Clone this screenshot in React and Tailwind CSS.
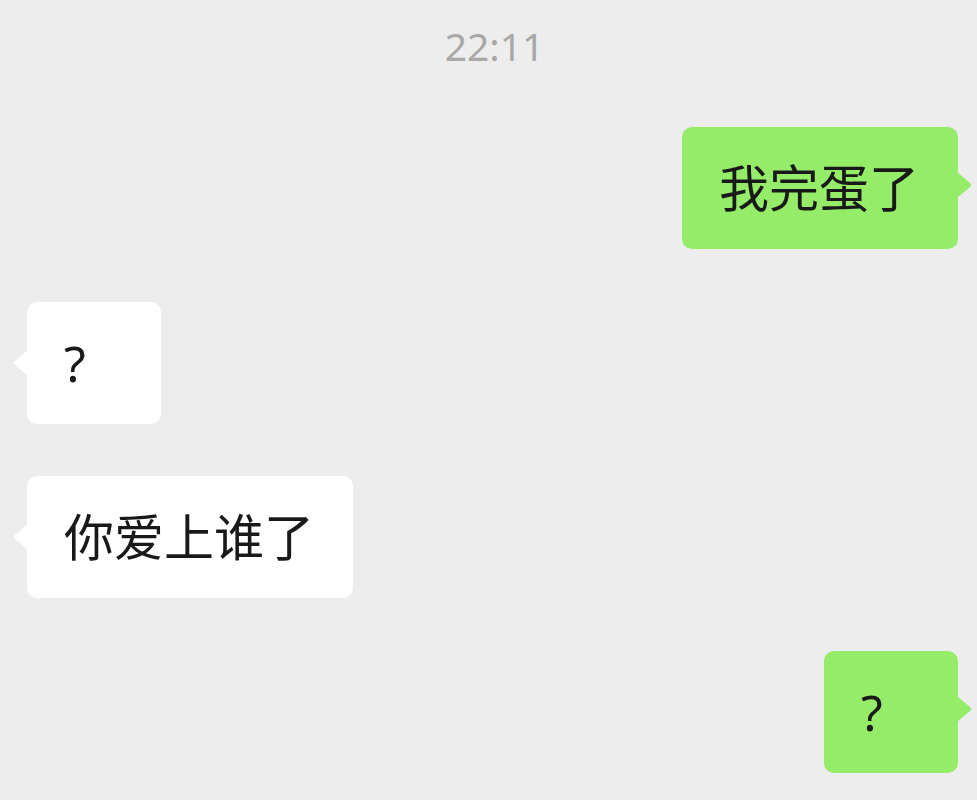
import React from 'react';

const messages = [
  { id: 1, side: 'right', text: '我完蛋了' },
  { id: 2, side: 'left', text: '?' },
  { id: 3, side: 'left', text: '你爱上谁了' },
  { id: 4, side: 'right', text: '?' },
];

const Tail = ({ side, color }) => (
  <svg
    width="16"
    height="26"
    viewBox="0 0 16 26"
    className={side === 'right' ? 'absolute top-[45px] -right-[15px]' : 'absolute top-[48px] -left-[15px]'}
  >
    {side === 'right' ? (
      <path d="M0 0 L13 11 Q15.5 13 13 15 L0 26 Z" fill={color} />
    ) : (
      <path d="M16 0 L3 11 Q0.5 13 3 15 L16 26 Z" fill={color} />
    )}
  </svg>
);

const Bubble = ({ side, text }) => {
  const mine = side === 'right';
  return (
    <div className={mine ? 'flex justify-end' : 'flex justify-start'}>
      <div
        className={
          (mine ? 'bg-[#95ec69]' : 'bg-white') +
          ' relative rounded-[10px] min-w-[134px] pl-[37px] pr-[39px] py-[36px] text-[50px] leading-[50px] text-[#191919]'
        }
      >
        {text}
        <Tail side={side} color={mine ? '#95ec69' : '#ffffff'} />
      </div>
    </div>
  );
};

export default function App() {
  return (
    <div
      className="w-[977px] h-[800px] overflow-hidden bg-[#ededed] pl-[27px] pr-[19px]"
      style={{ fontFamily: '"Noto Sans", "Noto Sans CJK SC", sans-serif' }}
    >
      <div className="pt-[23px] text-center text-[39px] leading-[46px] text-[#a8a8a8] pl-[4px]">22:11</div>
      <div className="mt-[58px] flex flex-col gap-[52.5px]">
        {messages.map((m) => (
          <Bubble key={m.id} side={m.side} text={m.text} />
        ))}
      </div>
    </div>
  );
}
